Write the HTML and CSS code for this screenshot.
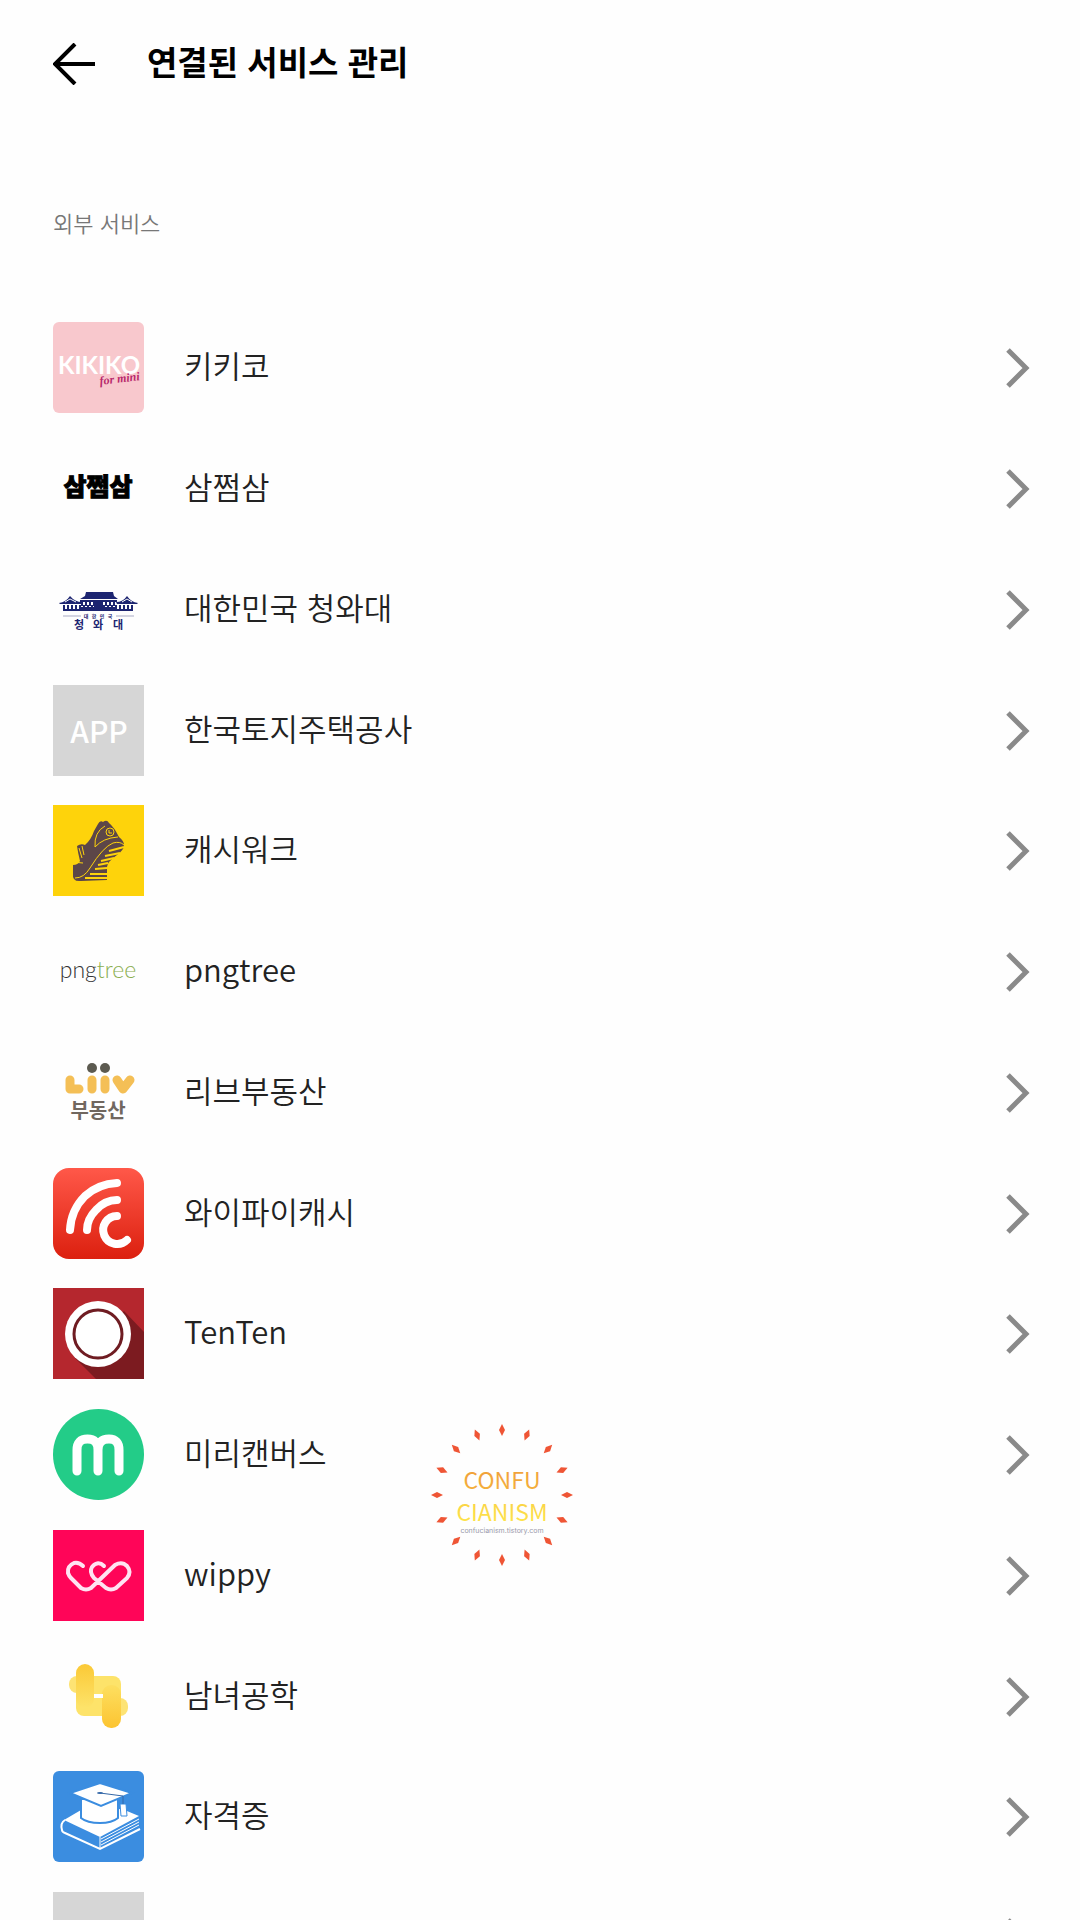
FILE: index.html
```html
<!DOCTYPE html>
<html lang="ko">
<head>
<meta charset="utf-8">
<meta name="viewport" content="width=device-width, initial-scale=1">
<title>연결된 서비스 관리</title>
<link rel="stylesheet" href="styles.css">
</head>
<body>
<svg class="defs" aria-hidden="true">
  <symbol id="chevron" viewBox="0 0 24 40"><path d="M2 2 20 20 2 38" fill="none" stroke="#8a8a8a" stroke-width="5"/></symbol>
</svg>
<div class="app">
  <header class="topbar">
    <button class="back" type="button" aria-label="뒤로">
      <svg viewBox="0 0 42 42"><path d="M22 1 2 21 22 41M2 21H42" fill="none" stroke="#000" stroke-width="4"/></svg>
    </button>
    <h1 class="title">연결된 서비스 관리</h1>
  </header>
  <main class="content">
    <h2 class="section">외부 서비스</h2>
    <ul class="services">
      <li><a class="service" href="#kikiko">
        <svg class="icon rounded" viewBox="0 0 91 91"><rect width="91" height="91" fill="#f8c8cd"/><text class="logo-kikiko" x="46" y="52">KIKIKO</text><text class="logo-mini" x="47" y="63" transform="rotate(-7 47 63)">for mini</text></svg>
        <span class="name">키키코</span><svg class="chevron"><use href="#chevron"/></svg></a></li>
      <li><a class="service" href="#samjjeomsam">
        <svg class="icon" viewBox="0 0 91 91"><text class="logo-sam" x="45" y="53">삼쩜삼</text></svg>
        <span class="name">삼쩜삼</span><svg class="chevron"><use href="#chevron"/></svg></a></li>
      <li><a class="service" href="#bluehouse">
        <svg class="icon" viewBox="0 0 91 91">
          <g fill="#1c2470">
            <path d="M33 28H60L61 32 65 35H27L32 32Z"/>
            <path d="M27 36H64V38H27ZM10 45H80V47H10ZM27 43H64V45H27Z"/>
            <path d="M6 39Q13 38 17 32Q22 38 29 38L28 40H7ZM63 38Q70 38 74 32Q78 38 85 39L84 40H64Z"/>
          </g>
          <path d="M12 38 17 35 23 38M69 38 74 35 79 38" fill="none" stroke="#fff" stroke-width="1"/>
          <path d="M10 43H80M28 40H64" fill="none" stroke="#1c2470" stroke-width="4" stroke-dasharray="2 2"/>
          <path d="M41 38H50V47H41Z" fill="#1c2470"/>
          <path d="M10 52H28M63 52H81" stroke="#a9abc4"/>
          <g class="logo-korea"><text x="33" y="54">대</text><text x="41" y="54">한</text><text x="49" y="54">민</text><text x="57" y="54">국</text></g>
          <g class="logo-house"><text x="26" y="65">청</text><text x="45" y="65">와</text><text x="65" y="65">대</text></g>
        </svg>
        <span class="name">대한민국 청와대</span><svg class="chevron"><use href="#chevron"/></svg></a></li>
      <li><a class="service" href="#lh">
        <svg class="icon" viewBox="0 0 91 91"><rect width="91" height="91" fill="#d6d6d6"/><text class="logo-app" x="46" y="58">APP</text></svg>
        <span class="name">한국토지주택공사</span><svg class="chevron"><use href="#chevron"/></svg></a></li>
      <li><a class="service" href="#cashwalk">
        <svg class="icon" viewBox="0 0 91 91"><rect width="91" height="91" fill="#fed30b"/>
          <path d="M45 19Q47 15 50 17Q54 14 56 18Q61 22 66 32Q71 36 71 40Q71 45 64 50Q54 57 54 62L54 75 28 76Q19 77 20 69L20 60Q25 60 27 56Q25 48 24 41Q28 38 32 40Q38 35 41 26Z" fill="#5c4648"/>
          <path d="M56 46 71 42M52 51 67 48M48 56 61 53M45 60 55 58M42 64 54 63M37 69H54M32 73H54" fill="none" stroke="#fed30b" stroke-width="2"/>
          <path d="M22 73Q31 73 37 63Q50 42 60 38Q67 36 71 40" fill="none" stroke="#fed30b" stroke-width="1"/>
          <path d="M42 42Q41 27 52 21M42 42Q50 33 65 32M19 57 30 58M26 43 29 53M29 41 31 50" fill="none" stroke="#fed30b" stroke-width="1"/>
          <circle cx="57" cy="27" r="4" fill="none" stroke="#fed30b"/><path d="M56 25V28H59" fill="none" stroke="#fed30b"/>
        </svg>
        <span class="name">캐시워크</span><svg class="chevron"><use href="#chevron"/></svg></a></li>
      <li><a class="service" href="#pngtree">
        <svg class="icon" viewBox="0 0 91 91"><text class="logo-png" x="45" y="52">png<tspan fill="#8aae4f">tree</tspan></text></svg>
        <span class="name">pngtree</span><svg class="chevron"><use href="#chevron"/></svg></a></li>
      <li><a class="service" href="#liiv">
        <svg class="icon" viewBox="0 0 91 91">
          <g fill="none" stroke="#f4bf56" stroke-width="9" stroke-linecap="round" stroke-linejoin="round"><path d="M17 33V42H26M39 33V42M52 33V42M64 33 70 42 77 33"/></g>
          <g fill="#5c5a50"><circle cx="39" cy="21" r="5"/><circle cx="52" cy="21" r="5"/></g>
          <text class="logo-liiv" x="45" y="71">부동산</text>
        </svg>
        <span class="name">리브부동산</span><svg class="chevron"><use href="#chevron"/></svg></a></li>
      <li><a class="service" href="#wificash">
        <svg class="icon" viewBox="0 0 91 91">
          <defs><linearGradient id="red" x2="0" y2="1"><stop stop-color="#ff5849"/><stop offset="1" stop-color="#dc200f"/></linearGradient></defs>
          <rect width="91" height="91" rx="16" fill="url(#red)"/>
          <path d="M64 15Q45 16 32 28Q18 42 17 62M64 32Q52 32 43 42Q34 51 34 62M64 48A14 14 0 1 0 74 72" fill="none" stroke="#fff" stroke-width="8" stroke-linecap="round"/>
        </svg>
        <span class="name">와이파이캐시</span><svg class="chevron"><use href="#chevron"/></svg></a></li>
      <li><a class="service" href="#tenten">
        <svg class="icon" viewBox="0 0 91 91"><rect width="91" height="91" fill="#b5272e"/><path d="M71 23 91 44V91H43L21 69Z" fill="#7c1b20"/><circle cx="45" cy="46" r="33" fill="#fff"/><circle cx="45" cy="46" r="24" fill="none" stroke="#6f1c22" stroke-width="3"/></svg>
        <span class="name">TenTen</span><svg class="chevron"><use href="#chevron"/></svg></a></li>
      <li><a class="service" href="#miricanvas">
        <svg class="icon" viewBox="0 0 91 91"><circle cx="45.500" cy="45.500" r="45.500" fill="#23cc88"/><path d="M24 62V41Q24 30 34.500 30Q45 30 45 41V62M45 41Q45 30 56 30Q66 30 66 41V62" fill="none" stroke="#fff" stroke-width="9" stroke-linecap="round"/></svg>
        <span class="name">미리캔버스</span><svg class="chevron"><use href="#chevron"/></svg></a></li>
      <li><a class="service" href="#wippy">
        <svg class="icon" viewBox="0 0 91 91"><rect width="91" height="91" fill="#ff0558"/><path d="M30 36Q26 32 21 33Q14 36 15 43Q16 46 18 48L28 58Q33 61 38 58L62 35Q69 31 74 36Q79 42 74 48L63 58Q58 61 53 58L41 48Q36 42 39 37Q45 30 51 36" fill="none" stroke="#ffe3f2" stroke-width="4" stroke-linecap="round" stroke-linejoin="round"/></svg>
        <span class="name">wippy</span><svg class="chevron"><use href="#chevron"/></svg></a></li>
      <li><a class="service" href="#coed">
        <svg class="icon" viewBox="0 0 91 91">
          <defs><linearGradient id="goldA" x2="0" y2="1"><stop stop-color="#fbc936"/><stop offset="1" stop-color="#fde36a"/></linearGradient><linearGradient id="goldB" x2="0" y2="1"><stop stop-color="#fddf60"/><stop offset="1" stop-color="#fcc431"/></linearGradient></defs>
          <rect x="16" y="25" width="22" height="17" rx="8" fill="#fde374"/><rect x="54" y="47" width="21" height="18" rx="8" fill="#fde374"/>
          <rect x="23" y="25" width="45" height="40" rx="8" fill="#fde36a"/>
          <rect x="23" y="13" width="18" height="44" rx="9" fill="url(#goldA)"/><rect x="49" y="34" width="19" height="43" rx="9" fill="url(#goldB)"/>
          <rect x="41" y="43" width="9" height="4" fill="#fff"/>
        </svg>
        <span class="name">남녀공학</span><svg class="chevron"><use href="#chevron"/></svg></a></li>
      <li><a class="service" href="#license">
        <svg class="icon rounded" viewBox="0 0 91 91"><rect width="91" height="91" fill="#3b8de0"/>
          <path d="M28 39 11 49 47 66 86 45 69 38Z" fill="#fff"/>
          <path d="M12 49Q7 52 9 59Q9 61 12 62L47 78 87 58" fill="none" stroke="#fff" stroke-width="2"/>
          <path d="M47 66V77M48 68 86 48M48 71 86 51M48 74 86 54" fill="none" stroke="#fff" stroke-width="1"/>
          <path d="M28 28V47Q34 52 47 52Q59 52 65 47V28Z" fill="#fff" stroke="#3b8de0" stroke-width="2"/>
          <path d="M17 22 47 12 79 22 48 35Z" fill="#fff" stroke="#3b8de0" stroke-width="2"/>
          <path d="M67 33 68 45H74L73 33Z" fill="#fff" stroke="#3b8de0" stroke-width="1"/>
          <path d="M47 22 70 25V33" fill="none" stroke="#3468a8" stroke-width="1"/><ellipse cx="47" cy="22" rx="3" ry="1" fill="#3468a8"/>
        </svg>
        <span class="name">자격증</span><svg class="chevron"><use href="#chevron"/></svg></a></li>
      <li><a class="service" href="#app" aria-label="APP">
        <svg class="icon" viewBox="0 0 91 91"><rect width="91" height="91" fill="#d6d6d6"/></svg>
        <span class="name"></span><svg class="chevron"><use href="#chevron"/></svg></a></li>
    </ul>
  </main>
  <svg class="watermark" viewBox="-71 -71 142 142" aria-hidden="true">
    <defs>
      <linearGradient id="orange" x2="0" y2="1"><stop stop-color="#ee9a3a"/><stop offset="1" stop-color="#f6b53c"/></linearGradient>
      <linearGradient id="yellow" x2="0" y2="1"><stop stop-color="#f8cd45"/><stop offset="1" stop-color="#ffe84c"/></linearGradient>
      <path id="ray" d="M0-71 3-65 0-59-3-65Z"/>
      <g id="quarter"><use href="#ray"/><use href="#ray" transform="rotate(22.500)"/><use href="#ray" transform="rotate(45)"/><use href="#ray" transform="rotate(67.500)"/></g>
    </defs>
    <g fill="#ef5535"><use href="#quarter"/><use href="#quarter" transform="rotate(90)"/><use href="#quarter" transform="rotate(180)"/><use href="#quarter" transform="rotate(270)"/></g>
    <text class="mark" y="-6" fill="url(#orange)">CONFU</text>
    <text class="mark" y="26" fill="url(#yellow)">CIANISM</text>
    <text class="mark-url" y="38">confucianism.tistory.com</text>
  </svg>
</div>
</body>
</html>
```
FILE: styles.css
```css
* { box-sizing: border-box; }

body {
  margin: 0;
  background: #fefefe;
  color: #222;
  font-family: "Noto Sans CJK KR", "Noto Sans", sans-serif;
}

.defs { display: none; }

.app {
  position: relative;
  height: 100vh;
  overflow: hidden auto;
  scrollbar-width: none;
}

.topbar {
  display: flex;
  align-items: center;
  gap: 52px;
  height: 128px;
  padding: 0 53px;
}

.back {
  width: 42px;
  height: 42px;
  padding: 0;
  border: 0;
  background: none;
}
.back svg { display: block; }

.title {
  margin: 0;
  padding-bottom: 6px;
  color: #000;
  font-size: 33px;
  line-height: 48px;
  font-weight: 700;
}

.content { padding: 78px 50px 0 53px; }

.section {
  margin: 0;
  color: #777;
  font-size: 22px;
  line-height: 32px;
  font-weight: 350;
}

.services {
  display: grid;
  grid-auto-rows: 121px 121px 121px 120px;
  margin: 84px 0 0;
  padding: 0;
  list-style: none;
}

.service {
  display: flex;
  align-items: center;
  color: inherit;
  text-decoration: none;
}

.icon { flex: none; width: 91px; height: 91px; }
.rounded { border-radius: 6px; }

.name {
  flex: 1;
  margin-left: 40px;
  padding-bottom: 6px;
  font-size: 31px;
  line-height: 44px;
  font-weight: 350;
}

.chevron { flex: none; width: 24px; height: 40px; }

.icon text { text-anchor: middle; }
.logo-kikiko { font: 700 24px Lato, sans-serif; fill: #fff; }
.icon .logo-mini { font: italic 700 12px "Liberation Serif", serif; fill: #b8286c; text-anchor: start; }
.logo-sam { font-size: 25px; font-weight: 900; fill: #000; stroke: #000; stroke-width: 1px; }
.logo-korea { font-size: 5px; font-weight: 700; fill: #1c2470; }
.logo-house { font-size: 11px; font-weight: 700; fill: #1c2470; }
.logo-app { font-size: 30px; font-weight: 500; fill: #fff; }
.logo-png { font: 300 23px Lato, sans-serif; fill: #333; }
.logo-liiv { font-size: 20px; font-weight: 700; fill: #70675f; }

.watermark {
  position: absolute;
  top: 1424px;
  left: 431px;
  width: 142px;
  height: 142px;
  pointer-events: none;
}
.watermark text { text-anchor: middle; }
.mark { font-size: 23px; font-weight: 400; }
.mark-url { font: 7px Inter, sans-serif; fill: #99a; }
```
